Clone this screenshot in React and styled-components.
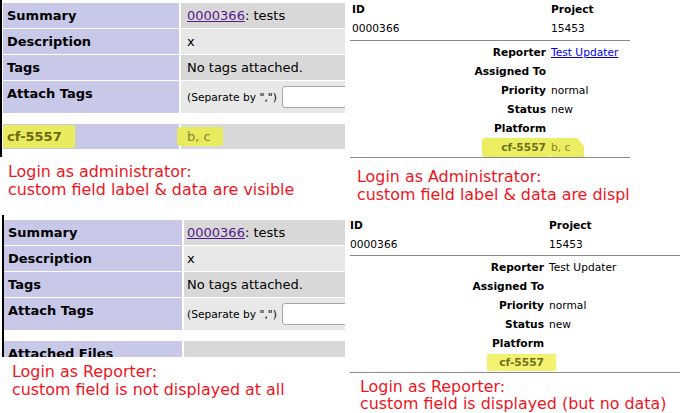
import styled, { createGlobalStyle } from "styled-components";

const GlobalStyle = createGlobalStyle`
  html, body {
    margin: 0;
    padding: 0;
    background: #fff;
  }
  body {
    font-family: "DejaVu Sans", Verdana, sans-serif;
    color: #000;
  }
`;

const Page = styled.div`
  display: grid;
  grid-template-columns: 345px 335px;
  grid-template-rows: 210px 203px;
  width: 680px;
  height: 413px;
  overflow: hidden;
  background: #fff;
`;

const Panel = styled.section`
  overflow: hidden;
  padding: ${(p) => p.$pad || "0"};
`;

/* left side: the bug view table */

const Frame = styled.div`
  box-sizing: border-box;
  height: ${(p) => p.$height}px;
  margin: ${(p) => p.$mt}px 0 0 ${(p) => p.$indent}px;
  padding: ${(p) => p.$top}px 0 0 ${(p) => p.$padLeft}px;
  border-left: 2px solid #000;
  overflow: hidden;
`;

const Table = styled.div`
  display: grid;
  grid-template-columns: ${(p) => p.$labelWidth}px 260px;
  column-gap: 2px;
  row-gap: 1px;
  font-size: 13px;
`;

const Label = styled.div`
  height: ${(p) => p.$h || 25}px;
  padding-left: 4px;
  background: #c8c8e8;
  font-weight: bold;
  line-height: 25px;
  white-space: nowrap;
`;

const Value = styled.div`
  display: flex;
  align-items: center;
  height: ${(p) => p.$h || 25}px;
  padding-left: ${(p) => p.$pad}px;
  background: ${(p) => (p.$light ? "#e8e8e8" : "#d8d8d8")};
  white-space: nowrap;
`;

const Spacer = styled.div`
  grid-column: 1 / -1;
  height: 9px;
`;

const IssueLink = styled.a`
  color: #551a8b;
  text-decoration: underline;
`;

const Hint = styled.span`
  font-size: 10.7px;
`;

const TagInput = styled.input`
  box-sizing: border-box;
  width: 140px;
  height: 22px;
  margin-left: 5px;
  border: 1px solid #a8a8a8;
  border-radius: 3px;
  background: #fff;
`;

const Marker = styled.span`
  display: inline-block;
  margin-left: ${(p) => p.$ml || 0}px;
  margin-right: ${(p) => p.$mr || 0}px;
  padding: 0 ${(p) => p.$pr || 0}px 0 ${(p) => p.$pl || 0}px;
  line-height: ${(p) => p.$h}px;
  background: ${(p) => p.$bg || "#e9eb5e"};
  color: ${(p) => p.$color || "#6c6c16"};
  border-radius: ${(p) => p.$radius || 0}px;
  clip-path: ${(p) => p.$clip || "none"};
`;

/* right side: the field sheet */

const Sheet = styled.div`
  width: ${(p) => p.$width}px;
  overflow: hidden;
  font-size: 10.67px;
`;

const Head = styled.div`
  display: grid;
  grid-template-columns: ${(p) => p.$col}px 1fr;
  column-gap: 5px;
  line-height: 19px;
  padding-bottom: ${(p) => p.$pb}px;
  border-bottom: 1px solid #8a8a8a;
`;

const HeadCell = styled.div`
  padding-left: ${(p) => p.$pad || 0}px;
  font-weight: ${(p) => (p.$bold ? "bold" : "normal")};
  white-space: nowrap;
`;

const Fields = styled.div`
  display: grid;
  grid-template-columns: ${(p) => p.$col}px 1fr;
  column-gap: 5px;
  line-height: 19px;
  padding-top: 2px;
  border-bottom: 1px solid #8a8a8a;
`;

const FieldLabel = styled.div`
  height: 19px;
  text-align: right;
  font-weight: bold;
  white-space: nowrap;
`;

const FieldValue = styled.div`
  height: 19px;
  white-space: nowrap;
`;

const UserLink = styled.a`
  color: #0000ee;
  text-decoration: underline;
`;

const Note = styled.p`
  margin: ${(p) => p.$mt}px 0 0;
  padding-left: ${(p) => p.$left}px;
  color: #f0141e;
  font-size: 15.9px;
  line-height: ${(p) => p.$lh || 18}px;
  white-space: nowrap;
`;

function BugTable({ labelWidth, valuePad, children }) {
  return (
    <Table $labelWidth={labelWidth}>
      <Label>Summary</Label>
      <Value $pad={valuePad}>
        <IssueLink href="#">0000366</IssueLink>: tests
      </Value>
      <Label>Description</Label>
      <Value $pad={valuePad} $light>
        x
      </Value>
      <Label>Tags</Label>
      <Value $pad={valuePad}>No tags attached.</Value>
      <Label $h={32}>Attach Tags</Label>
      <Value $pad={valuePad} $h={32} $light>
        <Hint>(Separate by ",")</Hint>
        <TagInput type="text" />
      </Value>
      <Spacer />
      {children}
    </Table>
  );
}

function FieldSheet({ width, col, headPad, headBottom, reporterLink, showData, children }) {
  const fields = [
    ["Reporter", reporterLink ? <UserLink href="#">Test Updater</UserLink> : "Test Updater"],
    ["Assigned To", ""],
    ["Priority", "normal"],
    ["Status", "new"],
    ["Platform", ""],
  ];
  return (
    <Sheet $width={width}>
      <Head $col={col} $pb={headBottom}>
        <HeadCell $pad={headPad} $bold>ID</HeadCell>
        <HeadCell $bold>Project</HeadCell>
        <HeadCell $pad={headPad}>0000366</HeadCell>
        <HeadCell>15453</HeadCell>
      </Head>
      <Fields $col={col}>
        {fields.map(([name, value]) => [
          <FieldLabel key={name}>{name}</FieldLabel>,
          <FieldValue key={name + "-v"}>{value}</FieldValue>,
        ])}
        {showData ? (
          <>
            <FieldLabel>
              <Marker $h={19} $pl={19} $pr={5} $mr={-5} $bg="#ecee62" $color="#6e6e18" $radius={3}>
                cf-5557
              </Marker>
            </FieldLabel>
            <FieldValue>
              <Marker
                $h={19}
                $pr={14}
                $bg="#ecee62"
                $color="#86862c"
                $clip="polygon(0 0, 78% 0, 100% 45%, 100% 100%, 0 100%)"
              >
                b, c
              </Marker>
            </FieldValue>
          </>
        ) : (
          <>
            <FieldLabel>
              <Marker $h={17} $pl={12} $pr={12} $mr={-12} $bg="#f2f270" $color="#6e6e1e">
                cf-5557
              </Marker>
            </FieldLabel>
            <FieldValue />
          </>
        )}
      </Fields>
      {children}
    </Sheet>
  );
}

export default function App() {
  return (
    <>
      <GlobalStyle />
      <Page>
        <Panel>
          <Frame $height={157} $mt={0} $indent={0} $top={3} $padLeft={1}>
            <BugTable labelWidth={176} valuePad={6}>
              <Label>
                <Marker $h={23} $ml={-4} $pl={4} $pr={13} $color="#6a6a12" $radius={2}>
                  cf-5557
                </Marker>
              </Label>
              <Value $pad={6}>
                <Marker $h={19} $ml={-10} $pl={10} $pr={12} $color="#858530" $radius={4}>
                  b, c
                </Marker>
              </Value>
            </BugTable>
          </Frame>
          <Note $mt={6} $left={8}>
            Login as administrator:
            <br />
            custom field label &amp; data are visible
          </Note>
        </Panel>

        <Panel $pad="0 0 0 5px">
          <FieldSheet width={280} col={196} headPad={2} headBottom={2} reporterLink showData>
            <Note $mt={10} $left={7}>
              Login as Administrator:
              <br />
              custom field label &amp; data are displayed
            </Note>
          </FieldSheet>
        </Panel>

        <Panel>
          <Frame $height={142} $mt={5} $indent={2} $top={5} $padLeft={0}>
            <BugTable labelWidth={178} valuePad={3}>
              <Label>Attached Files</Label>
              <Value $pad={3} />
            </BugTable>
          </Frame>
          <Note $mt={6} $left={12}>
            Login as Reporter:
            <br />
            custom field is not displayed at all
          </Note>
        </Panel>

        <Panel $pad="6px 0 0 5px">
          <FieldSheet width={330} col={194} headPad={0} headBottom={1}>
            <Note $mt={5} $left={10} $lh={17}>
              Login as Reporter:
              <br />
              custom field is displayed (but no data)
            </Note>
          </FieldSheet>
        </Panel>
      </Page>
    </>
  );
}
